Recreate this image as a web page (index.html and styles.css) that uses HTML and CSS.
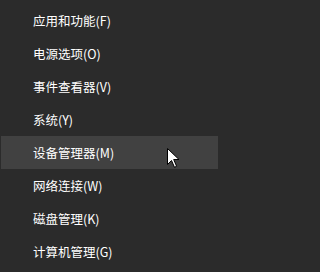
FILE: index.html
```html
<!DOCTYPE html>
<html lang="zh-CN">
<head>
<meta charset="utf-8">
<title>Win+X</title>
<link rel="stylesheet" href="styles.css">
</head>
<body>
<div class="menu">
  <div class="item">应用和功能(F)</div>
  <div class="item">电源选项(O)</div>
  <div class="item">事件查看器(V)</div>
  <div class="item">系统(Y)</div>
  <div class="item hover">设备管理器(M)
    <svg class="cursor" width="13" height="20" viewBox="0 0 13 20"><path d="M0.5 0.5 L0.5 16.5 L4.5 12.5 L7.5 19.3 L9.6 18.3 L6.7 11.5 L12 11.5 Z" fill="#fff" stroke="#000" stroke-width="1" stroke-linejoin="miter"/></svg>
  </div>
  <div class="item">网络连接(W)</div>
  <div class="item">磁盘管理(K)</div>
  <div class="item">计算机管理(G)</div>
</div>
</body>
</html>
```
FILE: styles.css
```css
html, body {
  margin: 0;
  padding: 0;
  background: #2b2b2b;
}
body {
  width: 218px;
  height: 272px;
  overflow: hidden;
}
.menu {
  padding-top: 4px;
  display: flex;
  flex-direction: column;
  font-family: "Noto Sans CJK SC", "Noto Sans", sans-serif;
  font-size: 12.5px;
  color: #ffffff;
}
.item {
  position: relative;
  height: 33px;
  line-height: 33px;
  padding-left: 32px;
  margin-left: 1px;
  white-space: nowrap;
}
.hover {
  background: #414141;
}
.cursor {
  position: absolute;
  left: 166px;
  top: 12px;
}
```
